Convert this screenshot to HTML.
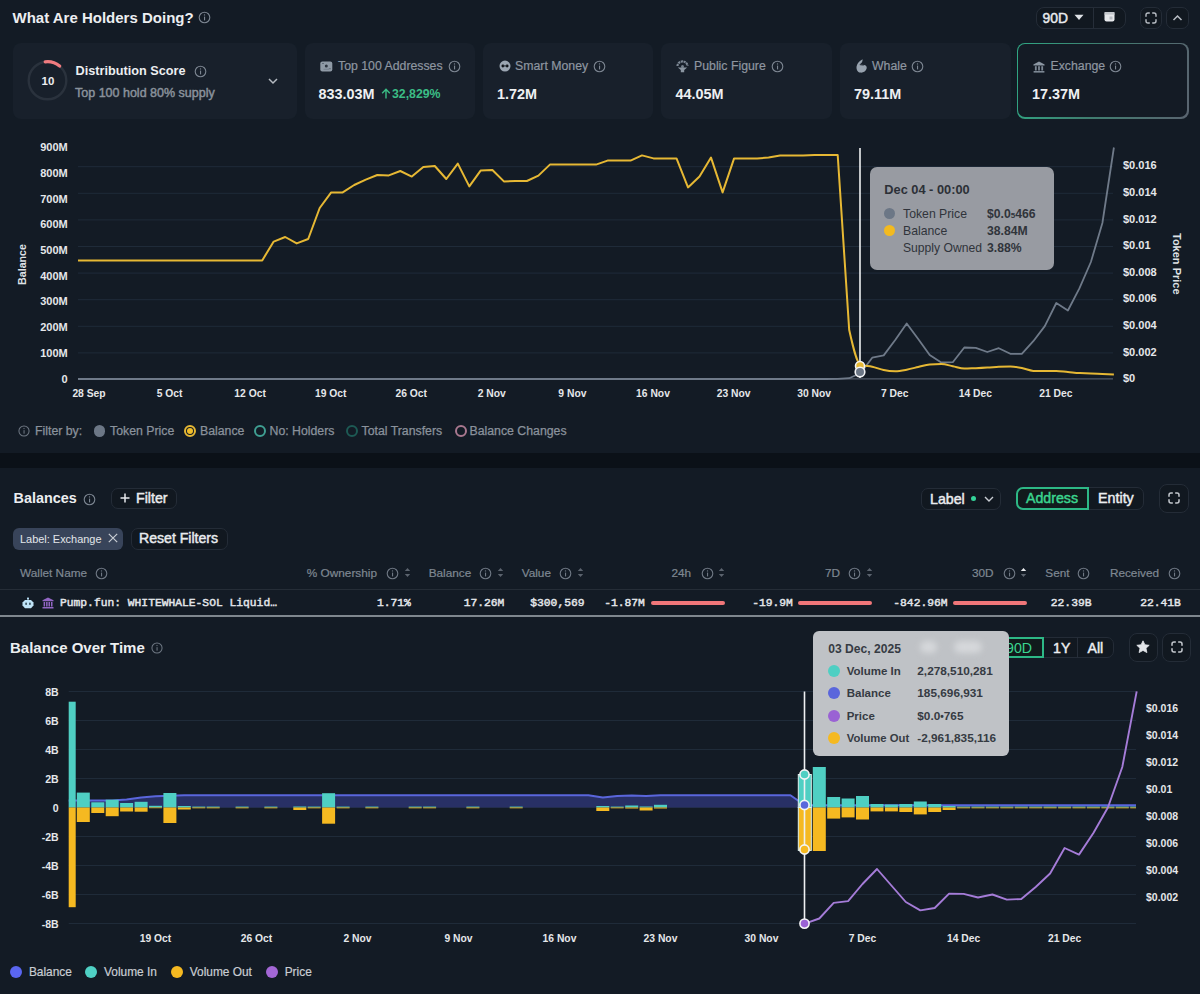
<!DOCTYPE html>
<html><head><meta charset="utf-8">
<style>
*{box-sizing:border-box;margin:0;padding:0}
html,body{width:1200px;height:994px;overflow:hidden;background:#0b1118;font-family:"Liberation Sans",sans-serif;color:#e6e8eb}
.abs{position:absolute}
.panel{position:absolute;left:0;width:1200px;background:#131b25}
.t{position:absolute;white-space:nowrap;line-height:1}
.info{position:absolute}
.card{position:absolute;top:43px;height:75.5px;background:#18202b;border-radius:8px}
.clab{position:absolute;top:60px;font-size:12.3px;color:#8e96a0;white-space:nowrap;line-height:13px;-webkit-text-stroke:0.2px #8e96a0}
.cval{position:absolute;top:86.5px;font-size:14.4px;font-weight:700;color:#eef0f2;white-space:nowrap;line-height:15px}
.yl1{position:absolute;left:0;width:67.7px;text-align:right;font-size:11px;font-weight:700;color:#e5e7ea;line-height:14px}
.rl1{position:absolute;left:1123px;font-size:11px;font-weight:700;color:#e5e7ea;line-height:14px}
.xl{position:absolute;width:60px;text-align:center;font-size:10.3px;font-weight:700;color:#e5e7ea;line-height:14px}
.yl2{position:absolute;left:0;width:58.7px;text-align:right;font-size:10.5px;font-weight:700;color:#e5e7ea;line-height:14px}
.rl2{position:absolute;left:1146px;font-size:10.5px;font-weight:700;color:#e5e7ea;line-height:14px}
.leg{position:absolute;top:424px;font-size:12.3px;color:#8a929c;white-space:nowrap;line-height:14px;-webkit-text-stroke:0.25px #8a929c}
.m{-webkit-text-stroke:0.45px currentColor}
.btn{position:absolute;border:1.5px solid #242c37;border-radius:6px;background:#111820}
.th{position:absolute;top:566px;font-size:11.8px;color:#7f8892;white-space:nowrap;line-height:14px;-webkit-text-stroke:0.2px #7f8892}
.td{position:absolute;top:596px;font-family:"Liberation Mono",monospace;font-size:11.3px;font-weight:400;color:#e3e6ea;white-space:nowrap;line-height:14px;-webkit-text-stroke:0.45px #e3e6ea}
.tip{position:absolute;white-space:nowrap;line-height:14px}
.leg2{position:absolute;top:965px;font-size:11.9px;color:#c9cdd3;white-space:nowrap;line-height:14px;-webkit-text-stroke:0.2px #c9cdd3}
</style></head>
<body>
<!-- ============ PANEL 1 ============ -->
<div class="panel" style="top:0;height:453px"></div>
<div class="t" style="left:12.5px;top:10px;font-size:15px;font-weight:700;color:#eceef1;line-height:16px">What Are Holders Doing?</div>
<svg class="abs" style="left:198px;top:11px" width="13" height="13" viewBox="0 0 13 13"><circle cx="6.5" cy="6.5" r="5.3" fill="none" stroke="#7c8591" stroke-width="1.1"/><rect x="6" y="5.6" width="1.1" height="3.8" fill="#7c8591"/><circle cx="6.5" cy="3.9" r="0.7" fill="#7c8591"/></svg>

<!-- top right controls -->
<div class="btn" style="left:1036px;top:7px;width:90px;height:22px;border-radius:8px"></div>
<div class="abs" style="left:1093px;top:8px;width:1px;height:20px;background:#262e39"></div>
<div class="t m" style="left:1042.5px;top:11px;font-size:13.9px;color:#e9ebee;line-height:15px">90D</div>
<svg class="abs" style="left:1074px;top:14px" width="10" height="7"><path d="M0.5,0.8 L9.5,0.8 L5,6 Z" fill="#dfe2e6"/></svg>
<svg class="abs" style="left:1104px;top:11px" width="11" height="11"><rect x="0.5" y="1" width="10" height="9.5" rx="2" fill="#e6e8eb"/><rect x="0.5" y="1" width="10" height="2.6" fill="#c3c7cc"/><rect x="5.5" y="5.5" width="3" height="3" fill="#b7bcc2"/></svg>
<div class="btn" style="left:1140px;top:7px;width:22px;height:22px;border-radius:7px"></div>
<svg class="abs" style="left:1145px;top:12px" width="12" height="12" fill="none" stroke="#b9bec5" stroke-width="1.4"><path d="M1,4.3 V3 Q1,1 3,1 H4.3 M7.7,1 H9 Q11,1 11,3 V4.3 M11,7.7 V9 Q11,11 9,11 H7.7 M4.3,11 H3 Q1,11 1,9 V7.7" stroke-linecap="round"/></svg>
<div class="btn" style="left:1166px;top:7px;width:23px;height:22px;border-radius:7px"></div>
<svg class="abs" style="left:1172px;top:14px" width="11" height="8" fill="none" stroke="#b9bec5" stroke-width="1.5"><path d="M1.5,6 L5.5,2 L9.5,6"/></svg>

<!-- cards -->
<div class="card" style="left:13px;width:284px"></div>
<svg class="abs" style="left:27px;top:60px" width="41" height="41" viewBox="0 0 41 41"><circle cx="20.5" cy="20.5" r="18.8" fill="none" stroke="#2a323d" stroke-width="2.4"/><path d="M 18.2 1.85 A 18.8 18.8 0 0 1 32.6 6.1" fill="none" stroke="#f07b7f" stroke-width="3.2" stroke-linecap="round"/></svg>
<div class="t" style="left:38px;top:75px;width:20px;text-align:center;font-size:11.5px;font-weight:700;color:#eceef1;line-height:12px">10</div>
<div class="t" style="left:75.5px;top:64px;font-size:12.7px;font-weight:700;color:#eceef1;line-height:14px">Distribution Score</div>
<svg class="abs" style="left:194px;top:65px" width="13" height="13" viewBox="0 0 13 13"><circle cx="6.5" cy="6.5" r="5.3" fill="none" stroke="#7c8591" stroke-width="1.1"/><rect x="6" y="5.6" width="1.1" height="3.8" fill="#7c8591"/><circle cx="6.5" cy="3.9" r="0.7" fill="#7c8591"/></svg>
<div class="t m" style="left:75px;top:86px;font-size:12.5px;color:#8a929c;line-height:14px">Top 100 hold 80% supply</div>
<svg class="abs" style="left:268px;top:78px" width="10" height="7" fill="none" stroke="#b5bac1" stroke-width="1.5"><path d="M1,1 L5,5 L9,1"/></svg>

<div class="card" style="left:305px;width:170px"></div>
<svg class="abs" style="left:319.5px;top:60.5px" width="13" height="11"><rect x="0.3" y="0.5" width="12" height="10" rx="2" fill="#8f9aa6"/><circle cx="6.3" cy="5" r="1.5" fill="#2d3540"/><rect x="2" y="2" width="2" height="1" fill="#5f6a76"/><rect x="8.8" y="7.2" width="2" height="1" fill="#5f6a76"/><rect x="3.5" y="7.8" width="5.5" height="0.8" fill="#6f7a86"/></svg>
<div class="clab" style="left:338px">Top 100 Addresses</div>
<svg class="abs info" style="left:447.5px;top:60px" width="13" height="13" viewBox="0 0 13 13"><circle cx="6.5" cy="6.5" r="5.3" fill="none" stroke="#7c8591" stroke-width="1.1"/><rect x="6" y="5.6" width="1.1" height="3.8" fill="#7c8591"/><circle cx="6.5" cy="3.9" r="0.7" fill="#7c8591"/></svg>
<div class="cval" style="left:318.5px">833.03M</div>
<svg class="abs" style="left:380.5px;top:88px" width="10" height="11" fill="none" stroke="#3bbd85" stroke-width="1.4"><path d="M5,10.5 V1.5 M1.2,5.2 L5,1.3 L8.8,5.2"/></svg><div class="t" style="left:392px;top:87px;font-size:12.3px;font-weight:700;color:#3bbd85;line-height:14px">32,829%</div>

<div class="card" style="left:483px;width:170px"></div>
<svg class="abs" style="left:498.5px;top:60px" width="12" height="12"><circle cx="6" cy="6.1" r="5.5" fill="#9ba6b2"/><circle cx="3.9" cy="6" r="1.45" fill="#0d1116"/><circle cx="8.1" cy="6" r="1.45" fill="#0d1116"/><rect x="3.9" y="5.4" width="4.2" height="1" fill="#2a323c"/></svg>
<div class="clab" style="left:515px">Smart Money</div>
<svg class="abs info" style="left:593px;top:60px" width="13" height="13" viewBox="0 0 13 13"><circle cx="6.5" cy="6.5" r="5.3" fill="none" stroke="#7c8591" stroke-width="1.1"/><rect x="6" y="5.6" width="1.1" height="3.8" fill="#7c8591"/><circle cx="6.5" cy="3.9" r="0.7" fill="#7c8591"/></svg>
<div class="cval" style="left:497px">1.72M</div>

<div class="card" style="left:661px;width:171px"></div>
<svg class="abs" style="left:676px;top:59.5px" width="13" height="13"><path d="M1.5,6 A5,4.6 0 0 1 11.5,6" fill="none" stroke="#7d8895" stroke-width="2.2" stroke-dasharray="2.2 0.6"/><circle cx="6.5" cy="6.5" r="1.5" fill="#75808c"/><path d="M1.8,7.4 H11.2 L8.2,10 V12.2 H4.8 V10 Z" fill="#8a95a1"/></svg>
<div class="clab" style="left:694px">Public Figure</div>
<svg class="abs info" style="left:770.5px;top:60px" width="13" height="13" viewBox="0 0 13 13"><circle cx="6.5" cy="6.5" r="5.3" fill="none" stroke="#7c8591" stroke-width="1.1"/><rect x="6" y="5.6" width="1.1" height="3.8" fill="#7c8591"/><circle cx="6.5" cy="3.9" r="0.7" fill="#7c8591"/></svg>
<div class="cval" style="left:675.5px">44.05M</div>

<div class="card" style="left:839.5px;width:171px"></div>
<svg class="abs" style="left:853px;top:58px" width="16" height="16"><path d="M9.6,1.3 C7,2.8 4.2,5 3.6,8.2 C3.1,11.2 4.5,14.2 7.3,14.6 C10.2,15 13.2,13 13.7,10.2 C14.1,8.2 12.6,6.8 10.6,7 L6.6,6.6 C8.3,5.6 9.8,3.6 9.6,1.3 Z" fill="#97a2ae"/><path d="M6.8,6.7 L10.8,7.2" stroke="#2a323c" stroke-width="0.9"/></svg>
<div class="clab" style="left:872px">Whale</div>
<svg class="abs info" style="left:911px;top:60px" width="13" height="13" viewBox="0 0 13 13"><circle cx="6.5" cy="6.5" r="5.3" fill="none" stroke="#7c8591" stroke-width="1.1"/><rect x="6" y="5.6" width="1.1" height="3.8" fill="#7c8591"/><circle cx="6.5" cy="3.9" r="0.7" fill="#7c8591"/></svg>
<div class="cval" style="left:854px">79.11M</div>

<div class="abs" style="left:1016.5px;top:43px;width:172px;height:75.5px;border-radius:8px;background:linear-gradient(100deg,#2fa783 0%,#3f7e70 45%,#5a6470 100%)"></div>
<div class="abs" style="left:1017.8px;top:44.3px;width:169.4px;height:72.9px;border-radius:7px;background:#141b25"></div>
<svg class="abs" style="left:1033px;top:60.5px" width="12" height="12"><path d="M6,0.6 L11.6,3.6 V4.4 H0.4 V3.6 Z" fill="#8c97a3"/><rect x="1.9" y="5.2" width="1.8" height="4.3" fill="#7d8894"/><rect x="5.1" y="5.2" width="1.8" height="4.3" fill="#7d8894"/><rect x="8.3" y="5.2" width="1.8" height="4.3" fill="#7d8894"/><rect x="0.6" y="10" width="10.8" height="1.6" fill="#7d8894"/></svg>
<div class="clab" style="left:1050.5px">Exchange</div>
<svg class="abs info" style="left:1108.5px;top:60px" width="13" height="13" viewBox="0 0 13 13"><circle cx="6.5" cy="6.5" r="5.3" fill="none" stroke="#7c8591" stroke-width="1.1"/><rect x="6" y="5.6" width="1.1" height="3.8" fill="#7c8591"/><circle cx="6.5" cy="3.9" r="0.7" fill="#7c8591"/></svg>
<div class="cval" style="left:1032px">17.37M</div>

<!-- chart 1 -->
<svg class="abs" style="left:0;top:0" width="1200" height="453">
<line x1="78" y1="166.7" x2="1113" y2="166.7" stroke="#1f2b39" stroke-width="1"/><line x1="78" y1="193.3" x2="1113" y2="193.3" stroke="#1f2b39" stroke-width="1"/><line x1="78" y1="219.9" x2="1113" y2="219.9" stroke="#1f2b39" stroke-width="1"/><line x1="78" y1="246.5" x2="1113" y2="246.5" stroke="#1f2b39" stroke-width="1"/><line x1="78" y1="273.1" x2="1113" y2="273.1" stroke="#1f2b39" stroke-width="1"/><line x1="78" y1="299.7" x2="1113" y2="299.7" stroke="#1f2b39" stroke-width="1"/><line x1="78" y1="326.3" x2="1113" y2="326.3" stroke="#1f2b39" stroke-width="1"/><line x1="78" y1="352.9" x2="1113" y2="352.9" stroke="#1f2b39" stroke-width="1"/>
<line x1="78" y1="378.8" x2="1113" y2="378.8" stroke="#525b68" stroke-width="1.3"/>
<path d="M78,379 L89.5,379 L101,379 L112.5,379 L124,379 L135.6,379 L147.1,379 L158.6,379 L170.1,379 L181.6,379 L193.1,379 L204.6,379 L216.1,379 L227.6,379 L239.1,379 L250.7,379 L262.2,379 L273.7,379 L285.2,379 L296.7,379 L308.2,379 L319.7,379 L331.2,379 L342.7,379 L354.2,379 L365.8,379 L377.3,379 L388.8,379 L400.3,379 L411.8,379 L423.3,379 L434.8,379 L446.3,379 L457.8,379 L469.3,379 L480.8,379 L492.4,379 L503.9,379 L515.4,379 L526.9,379 L538.4,379 L549.9,379 L561.4,379 L572.9,379 L584.4,379 L596,379 L607.5,379 L619,379 L630.5,379 L642,379 L653.5,379 L665,379 L676.5,379 L688,379 L699.5,379 L711,379 L722.6,379 L734.1,379 L745.6,379 L757.1,379 L768.6,379 L780.1,379 L791.6,379 L803.1,379 L814.6,379 L826.1,379 L837.7,378.8 L849.2,378.2 L860.7,373 L872.2,357.7 L883.7,355.4 L895.2,340 L906.7,323.5 L918.2,339 L929.7,355 L941.2,362.5 L952.8,362.2 L964.3,347.5 L975.8,347.8 L987.3,352 L998.8,348.2 L1010.3,353.8 L1021.8,353.8 L1033.3,341.2 L1044.8,326.1 L1056.3,303 L1067.9,310.5 L1079.4,288.4 L1090.9,262 L1102.4,223 L1113.9,147.5" fill="none" stroke="#6f7a89" stroke-width="1.8" stroke-linejoin="round"/>
<path d="M78,260.4 L89.5,260.4 L101,260.4 L112.5,260.4 L124,260.4 L135.6,260.4 L147.1,260.4 L158.6,260.4 L170.1,260.4 L181.6,260.4 L193.1,260.4 L204.6,260.4 L216.1,260.4 L227.6,260.4 L239.1,260.4 L250.7,260.4 L262.2,260.4 L273.7,241.6 L285.2,237 L296.7,243.4 L308.2,239 L319.7,208 L331.2,192.4 L342.7,192.4 L354.2,185 L365.8,179.6 L377.3,175 L388.8,175.4 L400.3,171 L411.8,176.6 L423.3,167 L434.8,166 L446.3,179 L457.8,163.6 L469.3,186.4 L480.8,170.4 L492.4,170 L503.9,181.4 L515.4,181 L526.9,181 L538.4,175.6 L549.9,164.6 L561.4,164.6 L572.9,164.6 L584.4,164.6 L596,164.6 L607.5,160.6 L619,160.6 L630.5,160.6 L642,155.4 L653.5,158.4 L665,158.4 L676.5,158.4 L688,187.4 L699.5,176.6 L711,157.6 L722.6,192.4 L734.1,158.4 L745.6,158.4 L757.1,158.4 L768.6,157.6 L780.1,155.4 L791.6,155.6 L803.1,155.4 L814.6,155 L826.1,155 L837.7,155 L849.2,330 L849.2,330 C853,346.9 856.8,363.9 860.7,365 C864.5,366.1 868.4,365.9 872.2,366.7 C876,367.5 879.9,369.2 883.7,370 C887.5,370.8 891.4,371.2 895.2,371.2 C899,371.2 902.9,370.4 906.7,369.7 C910.6,369 914.4,367.9 918.2,367 C922.1,366.1 925.9,364.7 929.7,364.4 C933.6,364.1 937.4,364 941.2,364 C945.1,364 948.9,365.4 952.8,366.2 C956.6,366.9 960.4,368.5 964.3,368.5 C968.1,368.5 971.9,368.3 975.8,368.2 C979.6,368.1 983.5,367.9 987.3,367.6 C991.1,367.4 995,366.9 998.8,366.7 C1002.6,366.5 1006.5,366.4 1010.3,366.4 C1014.1,366.4 1018,367.2 1021.8,368 C1025.7,368.8 1029.5,370.8 1033.3,370.9 C1037.2,371 1041,371 1044.8,371 C1048.7,371 1052.5,371 1056.3,371 C1060.2,371 1064,371.7 1067.9,372 C1071.7,372.3 1075.5,372.8 1079.4,373 C1083.2,373.2 1087,373.3 1090.9,373.5 C1094.7,373.7 1098.6,373.9 1102.4,374 C1106.2,374.1 1110.1,374.3 1113.9,374.4" fill="none" stroke="#e6b834" stroke-width="2" stroke-linejoin="round"/>
<line x1="860" y1="148" x2="860" y2="378" stroke="#eef0f2" stroke-width="1.6"/>
<circle cx="860" cy="366" r="4.5" fill="#e6b834" stroke="#f3f4f5" stroke-width="1.6"/>
<circle cx="860" cy="372" r="4.8" fill="#6c7786" stroke="#f3f4f5" stroke-width="1.6"/>
</svg>
<div class="yl1" style="top:140px">900M</div><div class="yl1" style="top:165.7px">800M</div><div class="yl1" style="top:191.5px">700M</div><div class="yl1" style="top:217.2px">600M</div><div class="yl1" style="top:243px">500M</div><div class="yl1" style="top:268.7px">400M</div><div class="yl1" style="top:294.4px">300M</div><div class="yl1" style="top:320.2px">200M</div><div class="yl1" style="top:345.9px">100M</div><div class="yl1" style="top:371.7px">0</div>
<div class="rl1" style="top:158.4px">$0.016</div><div class="rl1" style="top:185px">$0.014</div><div class="rl1" style="top:211.6px">$0.012</div><div class="rl1" style="top:238.2px">$0.01</div><div class="rl1" style="top:264.8px">$0.008</div><div class="rl1" style="top:291.4px">$0.006</div><div class="rl1" style="top:318px">$0.004</div><div class="rl1" style="top:344.6px">$0.002</div><div class="rl1" style="top:371.2px">$0</div>
<div class="xl" style="left:59px;top:387px">28 Sep</div><div class="xl" style="left:139.6px;top:387px">5 Oct</div><div class="xl" style="left:220.1px;top:387px">12 Oct</div><div class="xl" style="left:300.7px;top:387px">19 Oct</div><div class="xl" style="left:381.3px;top:387px">26 Oct</div><div class="xl" style="left:461.8px;top:387px">2 Nov</div><div class="xl" style="left:542.4px;top:387px">9 Nov</div><div class="xl" style="left:623px;top:387px">16 Nov</div><div class="xl" style="left:703.6px;top:387px">23 Nov</div><div class="xl" style="left:784.1px;top:387px">30 Nov</div><div class="xl" style="left:864.7px;top:387px">7 Dec</div><div class="xl" style="left:945.3px;top:387px">14 Dec</div><div class="xl" style="left:1025.8px;top:387px">21 Dec</div>
<div class="t" style="left:15.5px;top:284.5px;transform:rotate(-90deg);transform-origin:0 0;font-size:10.7px;font-weight:700;color:#dfe2e6;line-height:12px">Balance</div>
<div class="t" style="left:1182.5px;top:232.5px;transform:rotate(90deg);transform-origin:0 0;font-size:11px;font-weight:700;color:#dfe2e6;line-height:12px">Token Price</div>

<!-- tooltip 1 -->
<div class="abs" style="left:869.5px;top:167px;width:184px;height:102.5px;border-radius:7px;background:#989ba2"></div>
<div class="tip" style="left:884.3px;top:183px;font-size:12.8px;font-weight:700;color:#2c3037">Dec 04 - 00:00</div>
<div class="abs" style="left:884px;top:208px;width:11px;height:11px;border-radius:50%;background:#6c7786"></div>
<div class="tip" style="left:903px;top:207px;font-size:12.25px;color:#30343b">Token Price</div>
<div class="tip" style="left:987px;top:207px;font-size:12.2px;font-weight:700;color:#30343b">$0.0<span style="font-size:8px">5</span>466</div>
<div class="abs" style="left:884px;top:225px;width:11px;height:11px;border-radius:50%;background:#f3ba1f"></div>
<div class="tip" style="left:903px;top:224px;font-size:12.25px;color:#30343b">Balance</div>
<div class="tip" style="left:987px;top:224px;font-size:12.2px;font-weight:700;color:#30343b">38.84M</div>
<div class="tip" style="left:903px;top:240.5px;font-size:12.15px;color:#30343b">Supply Owned</div>
<div class="tip" style="left:987px;top:240.5px;font-size:12.2px;font-weight:700;color:#30343b">3.88%</div>

<!-- filter legend -->
<svg class="abs" style="left:17.5px;top:425px" width="12" height="12" viewBox="0 0 13 13"><circle cx="6.5" cy="6.5" r="5.5" fill="none" stroke="#6f7884" stroke-width="1.1"/><rect x="6" y="5.6" width="1.1" height="3.8" fill="#6f7884"/><circle cx="6.5" cy="3.9" r="0.7" fill="#6f7884"/></svg>
<div class="leg" style="left:35px">Filter by:</div>
<div class="abs" style="left:93.5px;top:425px;width:11.5px;height:11.5px;border-radius:50%;background:#6c7786"></div>
<div class="leg" style="left:110px">Token Price</div>
<div class="abs" style="left:184px;top:424.8px;width:12px;height:12px;border-radius:50%;border:2px solid #e6b834"></div>
<div class="abs" style="left:187px;top:427.8px;width:6px;height:6px;border-radius:50%;background:#f0bd2a"></div>
<div class="leg" style="left:200px">Balance</div>
<div class="abs" style="left:254px;top:424.8px;width:12px;height:12px;border-radius:50%;border:2px solid #3f9f92"></div>
<div class="leg" style="left:269.5px">No: Holders</div>
<div class="abs" style="left:346px;top:424.8px;width:12px;height:12px;border-radius:50%;border:2px solid #1d5a54"></div>
<div class="leg" style="left:361.5px">Total Transfers</div>
<div class="abs" style="left:454.5px;top:424.8px;width:12px;height:12px;border-radius:50%;border:2px solid #a9788f"></div>
<div class="leg" style="left:469.5px">Balance Changes</div>

<!-- ============ PANEL 2 ============ -->
<div class="panel" style="top:468px;height:526px"></div>
<div class="t" style="left:13.5px;top:491px;font-size:14.4px;font-weight:700;color:#eceef1;line-height:15px">Balances</div>
<svg class="abs" style="left:82.5px;top:492.5px" width="13" height="13" viewBox="0 0 13 13"><circle cx="6.5" cy="6.5" r="5.3" fill="none" stroke="#7c8591" stroke-width="1.1"/><rect x="6" y="5.6" width="1.1" height="3.8" fill="#7c8591"/><circle cx="6.5" cy="3.9" r="0.7" fill="#7c8591"/></svg>
<div class="btn" style="left:111px;top:487.5px;width:66px;height:21.5px;border-radius:7px"></div>
<svg class="abs" style="left:120px;top:493px" width="10" height="10" stroke="#e6e8eb" stroke-width="1.5"><path d="M5,0.5 V9.5 M0.5,5 H9.5"/></svg>
<div class="t m" style="left:136px;top:491px;font-size:14.2px;color:#e9ebee;line-height:15px">Filter</div>

<div class="abs" style="left:13px;top:528px;width:110px;height:21.5px;border-radius:6px;background:#38445a"></div>
<div class="t" style="left:20px;top:532.5px;font-size:10.95px;color:#e3e6ea;line-height:12px">Label: Exchange</div>
<svg class="abs" style="left:107.5px;top:533px" width="10" height="10" stroke="#c9cdd3" stroke-width="1.2"><path d="M0.8,0.8 L9.2,9.2 M9.2,0.8 L0.8,9.2"/></svg>
<div class="btn" style="left:131px;top:527.5px;width:96.5px;height:22.5px;border-radius:7px"></div>
<div class="t m" style="left:139px;top:531px;font-size:14.1px;color:#e9ebee;line-height:15px">Reset Filters</div>

<div class="btn" style="left:921px;top:488px;width:80px;height:21.5px;border-radius:7px"></div>
<div class="t m" style="left:930px;top:491.5px;font-size:14.2px;color:#e9ebee;line-height:15px">Label</div>
<div class="abs" style="left:970.5px;top:496px;width:5px;height:5px;border-radius:50%;background:#34d399"></div>
<svg class="abs" style="left:983.5px;top:495.5px" width="10" height="7" fill="none" stroke="#c9cdd3" stroke-width="1.4"><path d="M1,1 L5,5 L9,1"/></svg>

<div class="btn" style="left:1015.5px;top:487px;width:128.5px;height:22.5px;border-radius:7px"></div>
<div class="abs" style="left:1015.5px;top:487px;width:73.5px;height:22.5px;border-radius:7px 0 0 7px;border:2px solid #2db886;background:#111a1c"></div>
<div class="t m" style="left:1026px;top:491px;font-size:14.2px;color:#3bd58f;line-height:15px">Address</div>
<div class="t m" style="left:1098px;top:491px;font-size:14.3px;color:#eceef1;line-height:15px">Entity</div>
<div class="btn" style="left:1158.5px;top:484px;width:30.5px;height:28.5px;border-radius:8px"></div>
<svg class="abs" style="left:1168px;top:492px" width="12" height="12" fill="none" stroke="#c3c7cd" stroke-width="1.5"><path d="M1,4.3 V3 Q1,1 3,1 H4.3 M7.7,1 H9 Q11,1 11,3 V4.3 M11,7.7 V9 Q11,11 9,11 H7.7 M4.3,11 H3 Q1,11 1,9 V7.7" stroke-linecap="round"/></svg>

<!-- table header -->
<div class="th" style="left:20px">Wallet Name</div>
<svg class="abs" style="left:95px;top:567px" width="13" height="13" viewBox="0 0 13 13"><circle cx="6.5" cy="6.5" r="5.3" fill="none" stroke="#6f7884" stroke-width="1.1"/><rect x="6" y="5.6" width="1.1" height="3.8" fill="#6f7884"/><circle cx="6.5" cy="3.9" r="0.7" fill="#6f7884"/></svg>
<div class="th" style="left:306.8px">% Ownership</div><svg class="abs" style="left:385.5px;top:567px" width="13" height="13" viewBox="0 0 13 13"><circle cx="6.5" cy="6.5" r="5.3" fill="none" stroke="#6f7884" stroke-width="1.1"/><rect x="6" y="5.6" width="1.1" height="3.8" fill="#6f7884"/><circle cx="6.5" cy="3.9" r="0.7" fill="#6f7884"/></svg><svg class="abs" style="left:403.5px;top:566px" width="7" height="13"><path d="M0.8,5 L3.5,2 L6.2,5 Z" fill="#5b636e"/><path d="M0.8,8 L3.5,11 L6.2,8 Z" fill="#5b636e"/></svg><div class="th" style="left:428.7px">Balance</div><svg class="abs" style="left:479px;top:567px" width="13" height="13" viewBox="0 0 13 13"><circle cx="6.5" cy="6.5" r="5.3" fill="none" stroke="#6f7884" stroke-width="1.1"/><rect x="6" y="5.6" width="1.1" height="3.8" fill="#6f7884"/><circle cx="6.5" cy="3.9" r="0.7" fill="#6f7884"/></svg><svg class="abs" style="left:496.5px;top:566px" width="7" height="13"><path d="M0.8,5 L3.5,2 L6.2,5 Z" fill="#5b636e"/><path d="M0.8,8 L3.5,11 L6.2,8 Z" fill="#5b636e"/></svg><div class="th" style="left:521.7px">Value</div><svg class="abs" style="left:558.5px;top:567px" width="13" height="13" viewBox="0 0 13 13"><circle cx="6.5" cy="6.5" r="5.3" fill="none" stroke="#6f7884" stroke-width="1.1"/><rect x="6" y="5.6" width="1.1" height="3.8" fill="#6f7884"/><circle cx="6.5" cy="3.9" r="0.7" fill="#6f7884"/></svg><svg class="abs" style="left:576.5px;top:566px" width="7" height="13"><path d="M0.8,5 L3.5,2 L6.2,5 Z" fill="#5b636e"/><path d="M0.8,8 L3.5,11 L6.2,8 Z" fill="#5b636e"/></svg><div class="th" style="left:671.4px">24h</div><svg class="abs" style="left:700.5px;top:567px" width="13" height="13" viewBox="0 0 13 13"><circle cx="6.5" cy="6.5" r="5.3" fill="none" stroke="#6f7884" stroke-width="1.1"/><rect x="6" y="5.6" width="1.1" height="3.8" fill="#6f7884"/><circle cx="6.5" cy="3.9" r="0.7" fill="#6f7884"/></svg><svg class="abs" style="left:718px;top:566px" width="7" height="13"><path d="M0.8,5 L3.5,2 L6.2,5 Z" fill="#5b636e"/><path d="M0.8,8 L3.5,11 L6.2,8 Z" fill="#5b636e"/></svg><div class="th" style="left:825px">7D</div><svg class="abs" style="left:847.5px;top:567px" width="13" height="13" viewBox="0 0 13 13"><circle cx="6.5" cy="6.5" r="5.3" fill="none" stroke="#6f7884" stroke-width="1.1"/><rect x="6" y="5.6" width="1.1" height="3.8" fill="#6f7884"/><circle cx="6.5" cy="3.9" r="0.7" fill="#6f7884"/></svg><svg class="abs" style="left:865.5px;top:566px" width="7" height="13"><path d="M0.8,5 L3.5,2 L6.2,5 Z" fill="#5b636e"/><path d="M0.8,8 L3.5,11 L6.2,8 Z" fill="#5b636e"/></svg><div class="th" style="left:972px">30D</div><svg class="abs" style="left:1002.5px;top:567px" width="13" height="13" viewBox="0 0 13 13"><circle cx="6.5" cy="6.5" r="5.3" fill="none" stroke="#6f7884" stroke-width="1.1"/><rect x="6" y="5.6" width="1.1" height="3.8" fill="#6f7884"/><circle cx="6.5" cy="3.9" r="0.7" fill="#6f7884"/></svg><svg class="abs" style="left:1020px;top:566px" width="7" height="13"><path d="M0.8,5 L3.5,2 L6.2,5 Z" fill="#e9ebee"/><path d="M0.8,8 L3.5,11 L6.2,8 Z" fill="#5b636e"/></svg><div class="th" style="left:1045.3px">Sent</div><svg class="abs" style="left:1077px;top:567px" width="13" height="13" viewBox="0 0 13 13"><circle cx="6.5" cy="6.5" r="5.3" fill="none" stroke="#6f7884" stroke-width="1.1"/><rect x="6" y="5.6" width="1.1" height="3.8" fill="#6f7884"/><circle cx="6.5" cy="3.9" r="0.7" fill="#6f7884"/></svg><div class="th" style="left:1109.9px">Received</div><svg class="abs" style="left:1167.5px;top:567px" width="13" height="13" viewBox="0 0 13 13"><circle cx="6.5" cy="6.5" r="5.3" fill="none" stroke="#6f7884" stroke-width="1.1"/><rect x="6" y="5.6" width="1.1" height="3.8" fill="#6f7884"/><circle cx="6.5" cy="3.9" r="0.7" fill="#6f7884"/></svg>
<div class="abs" style="left:0;top:589px;width:1200px;height:1px;background:#252d37"></div>
<!-- row -->
<svg class="abs" style="left:22px;top:596.5px" width="12" height="12"><rect x="5" y="0.6" width="2" height="2" fill="#b5dcf2"/><path d="M3,3 H9 L11.5,5.5 V8.5 L9,11.2 H3 L0.5,8.5 V5.5 Z" fill="#bfe3f7"/><rect x="3.2" y="5.6" width="1.8" height="2.4" rx="0.8" fill="#3c5563"/><rect x="7" y="5.6" width="1.8" height="2.4" rx="0.8" fill="#3c5563"/></svg>
<svg class="abs" style="left:42px;top:597px" width="12" height="12"><path d="M6,0.5 L11.5,3.3 V4.2 H0.5 V3.3 Z" fill="#9266c4"/><rect x="1.6" y="5" width="1.5" height="4.5" fill="#9266c4"/><rect x="4.1" y="5" width="1.5" height="4.5" fill="#9266c4"/><rect x="6.5" y="5" width="1.5" height="4.5" fill="#9266c4"/><rect x="9" y="5" width="1.5" height="4.5" fill="#9266c4"/><rect x="0.5" y="10" width="11" height="1.5" fill="#9266c4"/></svg>
<div class="td" style="left:60px">Pump.fun: WHITEWHALE-SOL Liquid…</div>
<div class="td" style="right:789.1px">1.71%</div><div class="td" style="right:695.6px">17.26M</div><div class="td" style="right:615.5px">$300,569</div><div class="td" style="right:108.5px">22.39B</div><div class="td" style="right:19.2px">22.41B</div><div class="td" style="left:604.2px">-1.87M</div><div class="abs" style="left:650.7px;top:601px;width:74.1px;height:3.6px;border-radius:2px;background:#f07679"></div><div class="td" style="left:752.2px">-19.9M</div><div class="abs" style="left:798px;top:601px;width:74.4px;height:3.6px;border-radius:2px;background:#f07679"></div><div class="td" style="left:893.3px">-842.96M</div><div class="abs" style="left:953.3px;top:601px;width:73.9px;height:3.6px;border-radius:2px;background:#f07679"></div>
<div class="abs" style="left:0;top:615px;width:1200px;height:1.6px;background:#7f878e"></div>

<!-- Balance over time -->
<div class="t" style="left:10px;top:640px;font-size:15px;font-weight:700;color:#eceef1;line-height:16px">Balance Over Time</div>
<svg class="abs" style="left:151px;top:642px" width="12" height="12" viewBox="0 0 13 13"><circle cx="6.5" cy="6.5" r="5.5" fill="none" stroke="#6f7884" stroke-width="1.1"/><rect x="6" y="5.6" width="1.1" height="3.8" fill="#6f7884"/><circle cx="6.5" cy="3.9" r="0.7" fill="#6f7884"/></svg>

<!-- range buttons -->
<div class="btn" style="left:900px;top:636.5px;width:213.5px;height:21.5px;border-radius:7px"></div>
<div class="abs" style="left:990px;top:636.5px;width:54px;height:21.5px;border:2px solid #2db886;background:#111a1c"></div>
<div class="t" style="left:1006px;top:640.5px;font-size:14.2px;color:#3bd58f;line-height:15px">90D</div>
<div class="t m" style="left:1053px;top:640.5px;font-size:14.2px;color:#eceef1;line-height:15px">1Y</div>
<div class="abs" style="left:1077px;top:637px;width:1px;height:20.5px;background:#262e39"></div>
<div class="t m" style="left:1087.5px;top:640.5px;font-size:14.2px;color:#eceef1;line-height:15px">All</div>
<div class="btn" style="left:1128.5px;top:632.5px;width:29px;height:29px;border-radius:8px"></div>
<svg class="abs" style="left:1136px;top:640px" width="14" height="14"><path d="M7,0.8 L8.9,4.8 L13.2,5.3 L10,8.2 L10.9,12.6 L7,10.4 L3.1,12.6 L4,8.2 L0.8,5.3 L5.1,4.8 Z" fill="#e2e5e9" stroke="#e2e5e9" stroke-width="0.8" stroke-linejoin="round"/></svg>
<div class="btn" style="left:1162px;top:632.5px;width:29px;height:29px;border-radius:8px"></div>
<svg class="abs" style="left:1170.5px;top:641px" width="12" height="12" fill="none" stroke="#c3c7cd" stroke-width="1.5"><path d="M1,4.3 V3 Q1,1 3,1 H4.3 M7.7,1 H9 Q11,1 11,3 V4.3 M11,7.7 V9 Q11,11 9,11 H7.7 M4.3,11 H3 Q1,11 1,9 V7.7" stroke-linecap="round"/></svg>

<!-- chart 2 -->
<svg class="abs" style="left:0;top:0" width="1200" height="994">
<line x1="68.7" y1="691.5" x2="1136" y2="691.5" stroke="#1f2b39" stroke-width="1"/><line x1="68.7" y1="720.5" x2="1136" y2="720.5" stroke="#1f2b39" stroke-width="1"/><line x1="68.7" y1="749.5" x2="1136" y2="749.5" stroke="#1f2b39" stroke-width="1"/><line x1="68.7" y1="778.5" x2="1136" y2="778.5" stroke="#1f2b39" stroke-width="1"/><line x1="68.7" y1="807.5" x2="1136" y2="807.5" stroke="#1f2b39" stroke-width="1"/><line x1="68.7" y1="836.5" x2="1136" y2="836.5" stroke="#1f2b39" stroke-width="1"/><line x1="68.7" y1="865.5" x2="1136" y2="865.5" stroke="#1f2b39" stroke-width="1"/><line x1="68.7" y1="894.5" x2="1136" y2="894.5" stroke="#1f2b39" stroke-width="1"/><line x1="68.7" y1="923.5" x2="1136" y2="923.5" stroke="#1f2b39" stroke-width="1"/>
<path d="M68.7,807.5 L68.7,800.5 L83.3,800.5 L97.8,800.5 L112.2,800.5 L126.6,799.5 L141.1,797.5 L155.5,796.3 L169.9,795.8 L184.3,795.3 L198.8,795.3 L213.2,795.3 L227.6,795.3 L242.1,795.3 L256.5,795.3 L270.9,795.3 L285.4,795.3 L299.8,795.3 L314.2,795.3 L328.6,795.3 L343.1,795.3 L357.5,795.3 L371.9,795.3 L386.4,795.3 L400.8,795.3 L415.2,795.3 L429.6,795.3 L444.1,795.3 L458.5,795.3 L472.9,795.3 L487.4,795.3 L501.8,795.3 L516.2,795.3 L530.7,795.3 L545.1,795.3 L559.5,795.3 L574,795.3 L588.4,795.3 L602.8,797.5 L617.2,796 L631.7,795.6 L646.1,796 L660.5,795.3 L675,795.3 L689.4,795.3 L703.8,795.3 L718.2,795.3 L732.7,795.3 L747.1,795.3 L761.5,795.3 L776,795.3 L790.4,795.2 L804.8,805.3 L819.3,805.3 L833.7,805.3 L848.1,805.3 L862.5,805.3 L877,805.3 L891.4,805.3 L905.8,805.3 L920.3,805.3 L934.7,805.3 L949.1,805.3 L963.6,805.3 L978,805.3 L992.4,805.3 L1006.8,805.3 L1021.3,805.3 L1035.7,805.3 L1050.1,805.3 L1064.6,805.3 L1079,805.3 L1093.4,805.3 L1107.9,805.3 L1122.3,805.3 L1136,805.3 L1136,807.5 Z" fill="#283065"/>
<path d="M68.7,800.5 L83.3,800.5 L97.8,800.5 L112.2,800.5 L126.6,799.5 L141.1,797.5 L155.5,796.3 L169.9,795.8 L184.3,795.3 L198.8,795.3 L213.2,795.3 L227.6,795.3 L242.1,795.3 L256.5,795.3 L270.9,795.3 L285.4,795.3 L299.8,795.3 L314.2,795.3 L328.6,795.3 L343.1,795.3 L357.5,795.3 L371.9,795.3 L386.4,795.3 L400.8,795.3 L415.2,795.3 L429.6,795.3 L444.1,795.3 L458.5,795.3 L472.9,795.3 L487.4,795.3 L501.8,795.3 L516.2,795.3 L530.7,795.3 L545.1,795.3 L559.5,795.3 L574,795.3 L588.4,795.3 L602.8,797.5 L617.2,796 L631.7,795.6 L646.1,796 L660.5,795.3 L675,795.3 L689.4,795.3 L703.8,795.3 L718.2,795.3 L732.7,795.3 L747.1,795.3 L761.5,795.3 L776,795.3 L790.4,795.2 L804.8,805.3 L819.3,805.3 L833.7,805.3 L848.1,805.3 L862.5,805.3 L877,805.3 L891.4,805.3 L905.8,805.3 L920.3,805.3 L934.7,805.3 L949.1,805.3 L963.6,805.3 L978,805.3 L992.4,805.3 L1006.8,805.3 L1021.3,805.3 L1035.7,805.3 L1050.1,805.3 L1064.6,805.3 L1079,805.3 L1093.4,805.3 L1107.9,805.3 L1122.3,805.3 L1136,805.3" fill="none" stroke="#5a66dc" stroke-width="2" stroke-linejoin="round"/>
<rect x="68.7" y="701.7" width="7" height="105.8" fill="#4fcfc3"/><rect x="68.7" y="807.5" width="7" height="99.7" fill="#f5b921"/><rect x="76.8" y="792.6" width="13" height="14.9" fill="#4fcfc3"/><rect x="76.8" y="807.5" width="13" height="14.5" fill="#f5b921"/><rect x="91.3" y="802.3" width="13" height="5.2" fill="#4fcfc3"/><rect x="91.3" y="807.5" width="13" height="5.5" fill="#f5b921"/><rect x="105.7" y="799.7" width="13" height="7.8" fill="#4fcfc3"/><rect x="105.7" y="807.5" width="13" height="8.7" fill="#f5b921"/><rect x="120.1" y="803" width="13" height="4.5" fill="#4fcfc3"/><rect x="120.1" y="807.5" width="13" height="4" fill="#f5b921"/><rect x="134.6" y="801.8" width="13" height="5.7" fill="#4fcfc3"/><rect x="134.6" y="807.5" width="13" height="4.2" fill="#f5b921"/><rect x="149" y="805.8" width="13" height="1.7" fill="#4fcfc3"/><rect x="149" y="807.5" width="13" height="0.7" fill="#f5b921"/><rect x="163.4" y="793" width="13" height="14.5" fill="#4fcfc3"/><rect x="163.4" y="807.5" width="13" height="15.5" fill="#f5b921"/><rect x="177.8" y="806" width="13" height="1.5" fill="#4fcfc3"/><rect x="177.8" y="807.5" width="13" height="2" fill="#f5b921"/><rect x="192.3" y="806.6" width="13" height="0.9" fill="#4fcfc3"/><rect x="192.3" y="807.5" width="13" height="0.8" fill="#f5b921"/><rect x="206.7" y="806.6" width="13" height="0.9" fill="#4fcfc3"/><rect x="206.7" y="807.5" width="13" height="0.8" fill="#f5b921"/><rect x="235.6" y="806.6" width="13" height="0.9" fill="#4fcfc3"/><rect x="235.6" y="807.5" width="13" height="0.8" fill="#f5b921"/><rect x="264.4" y="806.6" width="13" height="0.9" fill="#4fcfc3"/><rect x="264.4" y="807.5" width="13" height="0.8" fill="#f5b921"/><rect x="293.3" y="806.5" width="13" height="1" fill="#4fcfc3"/><rect x="293.3" y="807.5" width="13" height="2.5" fill="#f5b921"/><rect x="307.7" y="806.6" width="13" height="0.9" fill="#4fcfc3"/><rect x="307.7" y="807.5" width="13" height="0.8" fill="#f5b921"/><rect x="322.1" y="793.2" width="13" height="14.3" fill="#4fcfc3"/><rect x="322.1" y="807.5" width="13" height="16.2" fill="#f5b921"/><rect x="336.6" y="806.6" width="13" height="0.9" fill="#4fcfc3"/><rect x="336.6" y="807.5" width="13" height="0.8" fill="#f5b921"/><rect x="365.4" y="806.6" width="13" height="0.9" fill="#4fcfc3"/><rect x="365.4" y="807.5" width="13" height="0.8" fill="#f5b921"/><rect x="408.7" y="806.6" width="13" height="0.9" fill="#4fcfc3"/><rect x="408.7" y="807.5" width="13" height="0.8" fill="#f5b921"/><rect x="423.1" y="806.6" width="13" height="0.9" fill="#4fcfc3"/><rect x="423.1" y="807.5" width="13" height="0.8" fill="#f5b921"/><rect x="466.4" y="806.6" width="13" height="0.9" fill="#4fcfc3"/><rect x="466.4" y="807.5" width="13" height="0.8" fill="#f5b921"/><rect x="509.7" y="806.6" width="13" height="0.9" fill="#4fcfc3"/><rect x="509.7" y="807.5" width="13" height="0.8" fill="#f5b921"/><rect x="596.3" y="806" width="13" height="1.5" fill="#4fcfc3"/><rect x="596.3" y="807.5" width="13" height="3.5" fill="#f5b921"/><rect x="610.7" y="806.6" width="13" height="0.9" fill="#4fcfc3"/><rect x="610.7" y="807.5" width="13" height="0.8" fill="#f5b921"/><rect x="625.2" y="805.5" width="13" height="2" fill="#4fcfc3"/><rect x="625.2" y="807.5" width="13" height="1" fill="#f5b921"/><rect x="639.6" y="806.5" width="13" height="1" fill="#4fcfc3"/><rect x="639.6" y="807.5" width="13" height="3" fill="#f5b921"/><rect x="654" y="804.8" width="13" height="2.7" fill="#4fcfc3"/><rect x="654" y="807.5" width="13" height="1" fill="#f5b921"/><rect x="798.3" y="774.5" width="13" height="33" fill="#4fcfc3" stroke="#dff3ef" stroke-width="1"/><rect x="798.3" y="807.5" width="13" height="42.9" fill="#f5b921" stroke="#dff3ef" stroke-width="1"/><rect x="812.8" y="767" width="13" height="40.5" fill="#4fcfc3"/><rect x="812.8" y="807.5" width="13" height="43.5" fill="#f5b921"/><rect x="827.2" y="797" width="13" height="10.5" fill="#4fcfc3"/><rect x="827.2" y="807.5" width="13" height="11.1" fill="#f5b921"/><rect x="841.6" y="798.5" width="13" height="9" fill="#4fcfc3"/><rect x="841.6" y="807.5" width="13" height="9.9" fill="#f5b921"/><rect x="856" y="796" width="13" height="11.5" fill="#4fcfc3"/><rect x="856" y="807.5" width="13" height="12" fill="#f5b921"/><rect x="870.5" y="804" width="13" height="3.5" fill="#4fcfc3"/><rect x="870.5" y="807.5" width="13" height="3.9" fill="#f5b921"/><rect x="884.9" y="804.5" width="13" height="3" fill="#4fcfc3"/><rect x="884.9" y="807.5" width="13" height="3.9" fill="#f5b921"/><rect x="899.3" y="804" width="13" height="3.5" fill="#4fcfc3"/><rect x="899.3" y="807.5" width="13" height="4.5" fill="#f5b921"/><rect x="913.8" y="801.5" width="13" height="6" fill="#4fcfc3"/><rect x="913.8" y="807.5" width="13" height="6.9" fill="#f5b921"/><rect x="928.2" y="804" width="13" height="3.5" fill="#4fcfc3"/><rect x="928.2" y="807.5" width="13" height="4.5" fill="#f5b921"/><rect x="942.6" y="806" width="13" height="1.5" fill="#4fcfc3"/><rect x="942.6" y="807.5" width="13" height="2.5" fill="#f5b921"/><rect x="957.1" y="806.6" width="13" height="0.9" fill="#4fcfc3"/><rect x="957.1" y="807.5" width="13" height="0.8" fill="#f5b921"/><rect x="971.5" y="806.6" width="13" height="0.9" fill="#4fcfc3"/><rect x="971.5" y="807.5" width="13" height="0.8" fill="#f5b921"/><rect x="985.9" y="806.6" width="13" height="0.9" fill="#4fcfc3"/><rect x="985.9" y="807.5" width="13" height="0.8" fill="#f5b921"/><rect x="1000.3" y="806.6" width="13" height="0.9" fill="#4fcfc3"/><rect x="1000.3" y="807.5" width="13" height="0.8" fill="#f5b921"/><rect x="1014.8" y="806.6" width="13" height="0.9" fill="#4fcfc3"/><rect x="1014.8" y="807.5" width="13" height="0.8" fill="#f5b921"/><rect x="1029.2" y="806.6" width="13" height="0.9" fill="#4fcfc3"/><rect x="1029.2" y="807.5" width="13" height="0.8" fill="#f5b921"/><rect x="1043.6" y="806.6" width="13" height="0.9" fill="#4fcfc3"/><rect x="1043.6" y="807.5" width="13" height="0.8" fill="#f5b921"/><rect x="1058.1" y="806.6" width="13" height="0.9" fill="#4fcfc3"/><rect x="1058.1" y="807.5" width="13" height="0.8" fill="#f5b921"/><rect x="1072.5" y="806.6" width="13" height="0.9" fill="#4fcfc3"/><rect x="1072.5" y="807.5" width="13" height="0.8" fill="#f5b921"/><rect x="1086.9" y="806.6" width="13" height="0.9" fill="#4fcfc3"/><rect x="1086.9" y="807.5" width="13" height="0.8" fill="#f5b921"/><rect x="1101.4" y="806.6" width="13" height="0.9" fill="#4fcfc3"/><rect x="1101.4" y="807.5" width="13" height="0.8" fill="#f5b921"/><rect x="1115.8" y="806.6" width="13" height="0.9" fill="#4fcfc3"/><rect x="1115.8" y="807.5" width="13" height="0.8" fill="#f5b921"/><rect x="1130.2" y="806.6" width="5.8" height="0.9" fill="#4fcfc3"/><rect x="1130.2" y="807.5" width="5.8" height="0.8" fill="#f5b921"/>
<path d="M804.8,923.6 L819.3,918.5 L833.7,902.9 L848.1,901.1 L862.5,884 L877,869 L891.4,885.5 L905.8,902 L920.3,910.4 L934.7,908 L949.1,893.6 L963.6,893.9 L978,897.5 L992.4,894.5 L1006.8,899.6 L1021.3,899 L1035.7,887 L1050.1,873.5 L1064.6,848 L1079,854.6 L1093.4,833 L1107.9,807.5 L1122.3,767 L1136.7,691.4" fill="none" stroke="#a57cd8" stroke-width="1.9" stroke-linejoin="round"/>
<line x1="804.5" y1="691.5" x2="804.5" y2="924" stroke="#eef0f2" stroke-width="1.6"/>
<circle cx="804.5" cy="774.5" r="4.6" fill="#4fcfc3" stroke="#f3f4f5" stroke-width="1.6"/>
<circle cx="804.5" cy="805" r="4.6" fill="#5a66dc" stroke="#f3f4f5" stroke-width="1.6"/>
<circle cx="804.5" cy="849.5" r="4.6" fill="#f5b921" stroke="#f3f4f5" stroke-width="1.6"/>
<circle cx="804.5" cy="923.6" r="4.6" fill="#9a62d4" stroke="#f3f4f5" stroke-width="1.6"/>
</svg>
<div class="yl2" style="top:684.5px">8B</div><div class="yl2" style="top:713.5px">6B</div><div class="yl2" style="top:742.5px">4B</div><div class="yl2" style="top:771.5px">2B</div><div class="yl2" style="top:800.5px">0</div><div class="yl2" style="top:829.5px">-2B</div><div class="yl2" style="top:858.5px">-4B</div><div class="yl2" style="top:887.5px">-6B</div><div class="yl2" style="top:916.5px">-8B</div>
<div class="rl2" style="top:701.3px">$0.016</div><div class="rl2" style="top:728.3px">$0.014</div><div class="rl2" style="top:755.2px">$0.012</div><div class="rl2" style="top:782.2px">$0.01</div><div class="rl2" style="top:809.2px">$0.008</div><div class="rl2" style="top:836.1px">$0.006</div><div class="rl2" style="top:863.1px">$0.004</div><div class="rl2" style="top:890.1px">$0.002</div>
<div class="xl" style="left:125.5px;top:932px">19 Oct</div><div class="xl" style="left:226.5px;top:932px">26 Oct</div><div class="xl" style="left:327.5px;top:932px">2 Nov</div><div class="xl" style="left:428.5px;top:932px">9 Nov</div><div class="xl" style="left:529.5px;top:932px">16 Nov</div><div class="xl" style="left:630.5px;top:932px">23 Nov</div><div class="xl" style="left:731.5px;top:932px">30 Nov</div><div class="xl" style="left:832.5px;top:932px">7 Dec</div><div class="xl" style="left:933.6px;top:932px">14 Dec</div><div class="xl" style="left:1034.6px;top:932px">21 Dec</div>

<!-- tooltip 2 -->
<div class="abs" style="left:813.3px;top:630.7px;width:196px;height:125.3px;border-radius:6px;background:#bfc2c6"></div>
<div class="abs" style="left:920px;top:641px;width:17px;height:12px;border-radius:6px;background:#d6d8db;filter:blur(3px)"></div>
<div class="abs" style="left:954px;top:641px;width:28px;height:12px;border-radius:6px;background:#d6d8db;filter:blur(3px)"></div>
<div class="tip" style="left:828.3px;top:642px;font-size:12.1px;font-weight:700;color:#363b43">03 Dec, 2025</div>
<div class="abs" style="left:827.7px;top:665px;width:12px;height:12px;border-radius:50%;background:#4fcfc3"></div>
<div class="tip" style="left:846.7px;top:664px;font-size:11.5px;font-weight:700;color:#363b43">Volume In</div>
<div class="tip" style="left:917.3px;top:664px;font-size:11.8px;font-weight:700;color:#363b43">2,278,510,281</div>
<div class="abs" style="left:827.7px;top:687.3px;width:12px;height:12px;border-radius:50%;background:#5a66dc"></div>
<div class="tip" style="left:846.7px;top:686.3px;font-size:11.5px;font-weight:700;color:#363b43">Balance</div>
<div class="tip" style="left:917.3px;top:686.3px;font-size:11.8px;font-weight:700;color:#363b43">185,696,931</div>
<div class="abs" style="left:827.7px;top:709.7px;width:12px;height:12px;border-radius:50%;background:#9a62d4"></div>
<div class="tip" style="left:846.7px;top:708.7px;font-size:11.5px;font-weight:700;color:#363b43">Price</div>
<div class="tip" style="left:917.3px;top:708.7px;font-size:11.8px;font-weight:700;color:#363b43">$0.0<span style="font-size:10px">•</span>765</div>
<div class="abs" style="left:827.7px;top:731.7px;width:12px;height:12px;border-radius:50%;background:#f5b921"></div>
<div class="tip" style="left:846.7px;top:730.7px;font-size:11.3px;font-weight:700;color:#363b43">Volume Out</div>
<div class="tip" style="left:917.3px;top:730.7px;font-size:11.8px;font-weight:700;color:#363b43">-2,961,835,116</div>

<!-- legend 2 -->
<div class="abs" style="left:9.6px;top:965.8px;width:12px;height:12px;border-radius:50%;background:#5a66f0"></div>
<div class="leg2" style="left:28.9px">Balance</div>
<div class="abs" style="left:84.7px;top:965.8px;width:12px;height:12px;border-radius:50%;background:#4fd1c5"></div>
<div class="leg2" style="left:104px">Volume In</div>
<div class="abs" style="left:171px;top:965.8px;width:12px;height:12px;border-radius:50%;background:#f5b921"></div>
<div class="leg2" style="left:189.8px">Volume Out</div>
<div class="abs" style="left:266.2px;top:965.8px;width:12px;height:12px;border-radius:50%;background:#a367d6"></div>
<div class="leg2" style="left:284.7px">Price</div>
</body></html>
